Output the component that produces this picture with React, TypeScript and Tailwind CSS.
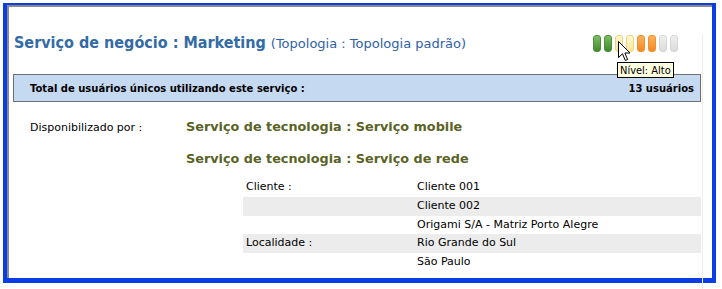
const cond = { fontFamily: '"DejaVu Sans Condensed", "DejaVu Sans", sans-serif' };
const sans = { fontFamily: '"DejaVu Sans", Verdana, sans-serif' };

const levels = [
  "from-[#7cc062] to-[#3f8a2c] border-[#4d8f3a]",
  "from-[#7cc062] to-[#3f8a2c] border-[#4d8f3a]",
  "from-[#fff8d0] to-[#fbe79a] border-[#f0d27a]",
  "from-[#fff8d0] to-[#fbe79a] border-[#f0d27a]",
  "from-[#fbb25a] to-[#f28a1e] border-[#f0902c]",
  "from-[#fbb25a] to-[#f28a1e] border-[#f0902c]",
  "from-[#eeeeee] to-[#dcdcdc] border-[#d6d6d6]",
  "from-[#eeeeee] to-[#dcdcdc] border-[#d6d6d6]",
];

const rows = [
  { label: "Cliente :", value: "Cliente 001" },
  { label: "", value: "Cliente 002" },
  { label: "", value: "Origami S/A - Matriz Porto Alegre" },
  { label: "Localidade :", value: "Rio Grande do Sul" },
  { label: "", value: "São Paulo" },
];

function Cursor() {
  return (
    <svg width="13" height="21" viewBox="0 0 13 21" className="absolute left-[618px] top-[41px]">
      <path
        d="M0.5 0.5 L0.5 16.5 L4.5 12.8 L7.3 19.5 L9.6 18.5 L6.9 12 L12 12 Z"
        fill="#fff"
        stroke="#000"
        strokeWidth="1"
        strokeLinejoin="miter"
      />
    </svg>
  );
}

export default function App() {
  return (
    <div className="relative w-[722px] h-[289px] overflow-hidden bg-white text-black" style={sans}>
      <div className="ml-[3px] mt-[3px] w-[713px] h-[280px] border-t-2 border-l-4 border-r-4 border-b-[5px] border-[#0b3ee2]">
        <div className="h-full border-t-2 border-l-2 border-t-[#8a8a8a] border-l-[#8a8a8a]">
          <div className="h-full pl-[4px] pr-[9px] border-b border-[#e6e6dc]">
            <div className="h-full border-r border-[#f0efe6] pr-[1px]">
              {/* title */}
              <div className="flex items-center justify-between h-[18px] mt-[27px] pl-[1px] pr-[23px]">
                <div className="flex items-baseline gap-[5px] whitespace-nowrap">
                  <span className="text-[16px] font-bold text-[#336ba6]" style={cond}>
                    Serviço de negócio : Marketing
                  </span>
                  <span className="text-[13px] text-[#2f62a8]">(Topologia : Topologia padrão)</span>
                </div>
                <div className="flex gap-[3px]">
                  {levels.map((c, i) => (
                    <div
                      key={i}
                      className={`w-[8px] h-[17px] rounded-[3px] border bg-gradient-to-b ${c}`}
                    />
                  ))}
                </div>
              </div>

              {/* total band */}
              <div className="mt-[22px] h-[28px] flex items-center justify-between border border-[#6f6f6f] bg-[#c5d9f1] pl-[16px] pr-[6px] text-[10px] font-bold">
                <span>Total de usuários únicos utilizando este serviço :</span>
                <span>13 usuários</span>
              </div>

              {/* provided by */}
              <div className="flex mt-[16px]">
                <div className="w-[173px] pl-[17px] pt-[2px] text-[11px]">Disponibilizado por :</div>
                <div className="flex-1">
                  <div className="text-[12.8px] font-bold text-[#5a6326] leading-[18px]">
                    Serviço de tecnologia : Serviço mobile
                  </div>
                  <div className="mt-[14px] text-[12.8px] font-bold text-[#5a6326] leading-[18px]">
                    Serviço de tecnologia : Serviço de rede
                  </div>
                  <div className="mt-[10px] ml-[57px] text-[11px]">
                    {rows.map((r, i) => (
                      <div
                        key={i}
                        className={`flex items-center h-[18.75px] ${i % 2 === 1 ? "bg-[#ececec]" : ""}`}
                      >
                        <div className="w-[174px] pl-[3px]">{r.label}</div>
                        <div>{r.value}</div>
                      </div>
                    ))}
                  </div>
                </div>
              </div>
            </div>
          </div>
        </div>
      </div>

      <Cursor />
      <div
        className="absolute left-[617px] top-[62px] h-[16px] px-[2px] flex items-center border border-black bg-[#ffffe1] text-[11px] leading-none"
        style={cond}
      >
        Nível: Alto
      </div>
    </div>
  );
}
